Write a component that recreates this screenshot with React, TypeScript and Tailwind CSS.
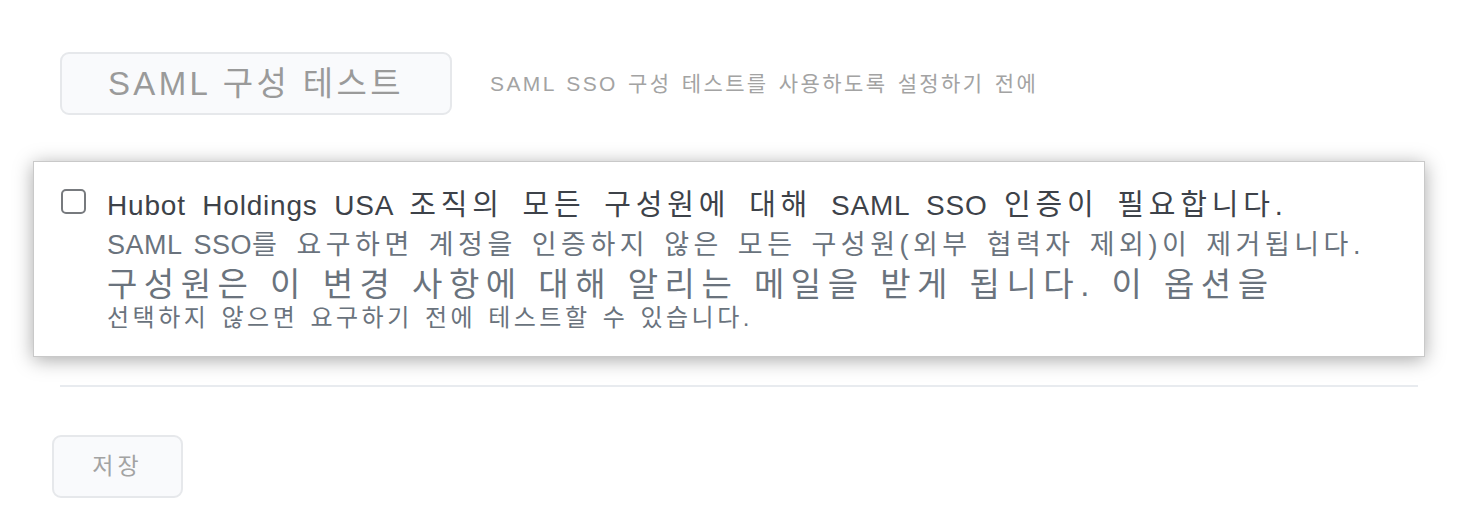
export default function App() {
  return (
    <div className="min-h-[532px] w-[1458px] bg-white font-['Liberation_Sans','Noto_Sans_CJK_KR',sans-serif]">
      <div className="pl-[60px] pr-[40px] pt-[52px]">
        {/* test button + hint */}
        <div className="flex items-center gap-[38px]">
          <button className="flex h-[63px] w-[392px] items-center justify-center rounded-[9px] border-2 border-[#e6e8eb] bg-[#f9fafc] text-[33px] tracking-[3.4px] text-[#9a9a9a]">
            SAML 구성 테스트
          </button>
          <p className="text-[21px] tracking-[2.4px] text-[#a3a3a3] [word-spacing:2px]">
            SAML SSO 구성 테스트를 사용하도록 설정하기 전에
          </p>
        </div>

        {/* require SSO card */}
        <div className="ml-[-27px] mr-[-7px] mt-[46px] flex h-[196px] gap-[21px] border border-[#c9c9c9] bg-white pl-[27px] pt-[26px] shadow-[0_3px_18px_rgba(0,0,0,0.34)]">
          <div className="mt-[1px] h-[25px] w-[25px] shrink-0 rounded-[5px] border-2 border-[#777a7e] bg-white" />
          <div className="flex flex-col">
            <p className="text-[28px] leading-[34px] text-[#3d4249]">
              <span className="tracking-[0.8px] [word-spacing:8px]">Hubot Holdings USA </span>
              <span className="text-[29px] tracking-[4.8px] [word-spacing:6px]">조직의 모든 구성원에 대해 </span>
              <span className="tracking-[0.8px] [word-spacing:8px]">SAML SSO </span>
              <span className="text-[29px] tracking-[4.8px] [word-spacing:6px]">인증이 필요합니다.</span>
            </p>
            <p className="text-[27px] leading-[44px] tracking-[4.5px] text-[#6a737d] [word-spacing:3px]">
              <span className="tracking-[0.5px] [word-spacing:4px]">SAML SSO</span>를 요구하면 계정을 인증하지 않은 모든 구성원(외부 협력자 제외)이 제거됩니다.
            </p>
            <p className="text-[33px] leading-[36px] tracking-[6.5px] text-[#6a737d]">
              구성원은 이 변경 사항에 대해 알리는 메일을 받게 됩니다. 이 옵션을
            </p>
            <p className="text-[24px] leading-[30px] tracking-[3.5px] text-[#6a737d] [word-spacing:2px]">
              선택하지 않으면 요구하기 전에 테스트할 수 있습니다.
            </p>
          </div>
        </div>

        <div className="mt-[28px] h-[2px] w-[1358px] bg-[#e8ebef]" />

        <button className="ml-[-8px] mt-[48px] flex h-[63px] w-[131px] items-center justify-center rounded-[9px] border-2 border-[#e6e8eb] bg-[#f9fafc] text-[23px] tracking-[4px] text-[#a3a3a3]">
          저장
        </button>
      </div>
    </div>
  );
}
